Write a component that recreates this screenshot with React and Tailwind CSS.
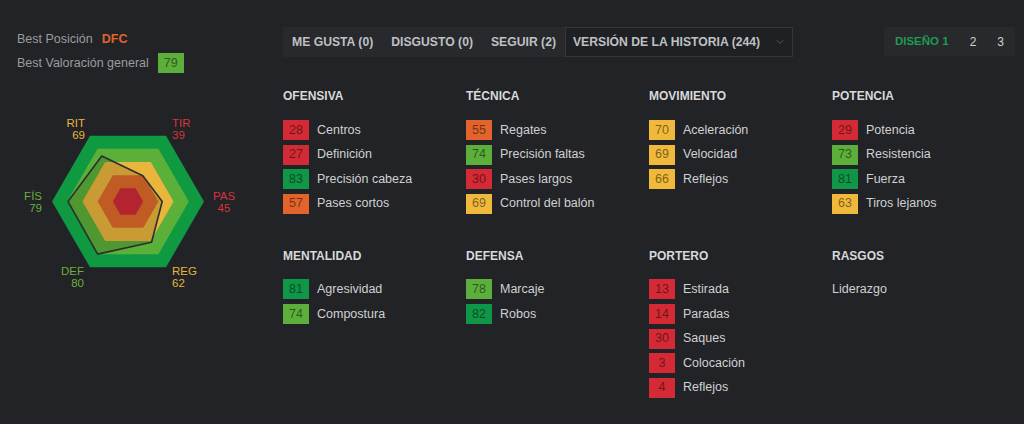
import { ChevronDown } from "lucide-react";

const sections = [
  {
    title: "OFENSIVA",
    stats: [
      [28, "Centros"],
      [27, "Definición"],
      [83, "Precisión cabeza"],
      [57, "Pases cortos"],
    ],
  },
  {
    title: "TÉCNICA",
    stats: [
      [55, "Regates"],
      [74, "Precisión faltas"],
      [30, "Pases largos"],
      [69, "Control del balón"],
    ],
  },
  {
    title: "MOVIMIENTO",
    stats: [
      [70, "Aceleración"],
      [69, "Velocidad"],
      [66, "Reflejos"],
    ],
  },
  {
    title: "POTENCIA",
    stats: [
      [29, "Potencia"],
      [73, "Resistencia"],
      [81, "Fuerza"],
      [63, "Tiros lejanos"],
    ],
  },
  {
    title: "MENTALIDAD",
    stats: [
      [81, "Agresividad"],
      [74, "Compostura"],
    ],
  },
  {
    title: "DEFENSA",
    stats: [
      [78, "Marcaje"],
      [82, "Robos"],
    ],
  },
  {
    title: "PORTERO",
    stats: [
      [13, "Estirada"],
      [14, "Paradas"],
      [30, "Saques"],
      [3, "Colocación"],
      [4, "Reflejos"],
    ],
  },
  {
    title: "RASGOS",
    traits: ["Liderazgo"],
  },
];

function badgeColor(v) {
  if (v >= 80) return "bg-[#109647]";
  if (v >= 72) return "bg-[#5daf3b]";
  if (v >= 60) return "bg-[#f0b93c]";
  if (v >= 50) return "bg-[#e2632b]";
  return "bg-[#d42a35]";
}

function Badge({ value }) {
  return (
    <span
      className={
        "flex h-[20px] w-[26px] shrink-0 items-center justify-center text-[12.5px] text-black/50 " +
        badgeColor(value)
      }
    >
      {value}
    </span>
  );
}

const CX = 128;
const CY = 101.5;
const R = 76;

function hexPoints(r) {
  return [0, 60, 120, 180, 240, 300]
    .map((a) => {
      const t = (a * Math.PI) / 180;
      return `${(CX + r * Math.cos(t)).toFixed(2)},${(CY + r * Math.sin(t)).toFixed(2)}`;
    })
    .join(" ");
}

// order follows the hexagon angles: 0,60,120,180,240,300
const player = [45, 62, 80, 79, 69, 39];

function playerPoints() {
  return player
    .map((v, i) => {
      const t = (i * 60 * Math.PI) / 180;
      const r = (v / 100) * R;
      return `${(CX + r * Math.cos(t)).toFixed(2)},${(CY + r * Math.sin(t)).toFixed(2)}`;
    })
    .join(" ");
}

const labels = [
  { name: "RIT", val: "69", x: 85, anchor: "end", y: 27, color: "#e8b53b" },
  { name: "TIR", val: "39", x: 172, anchor: "start", y: 27, color: "#d8333f" },
  { name: "FÍS", val: "79", x: 42, anchor: "end", y: 100, color: "#6aae3f" },
  { name: "PAS", val: "45", x: 224, anchor: "middle", y: 100, color: "#d8333f" },
  { name: "DEF", val: "80", x: 84, anchor: "end", y: 175, color: "#6aae3f" },
  { name: "REG", val: "62", x: 172, anchor: "start", y: 175, color: "#e8b53b" },
];

function Radar() {
  return (
    <svg width="260" height="200" viewBox="0 0 260 200" className="mt-[27px] block">
      <polygon points={hexPoints(R)} fill="#0f9a41" />
      <polygon points={hexPoints(R * 0.8)} fill="#5bb03a" />
      <polygon points={hexPoints(R * 0.6)} fill="#e9b53d" />
      <polygon points={hexPoints(R * 0.4)} fill="#df6a29" />
      <polygon points={hexPoints(R * 0.2)} fill="#d12b3a" />
      <polygon
        points={playerPoints()}
        fill="rgba(0,0,0,0.14)"
        stroke="#2b302d"
        strokeWidth="1.6"
        strokeLinejoin="round"
      />
      {labels.map((l) => (
        <g key={l.name} fill={l.color} fontSize="11.5" fontFamily="'Liberation Sans', Arial, sans-serif">
          <text x={l.x} y={l.y} textAnchor={l.anchor}>
            {l.name}
          </text>
          <text x={l.x} y={l.y + 11.5} textAnchor={l.anchor}>
            {l.val}
          </text>
        </g>
      ))}
    </svg>
  );
}

function Section({ section }) {
  return (
    <div>
      <h3 className="text-[12px] leading-[16px] font-bold text-[#d8d9db]">{section.title}</h3>
      <div className="mt-[15.6px] flex flex-col gap-[4.6px]">
        {section.stats &&
          section.stats.map(([v, name]) => (
            <div key={name} className="flex h-[20px] items-center gap-[8px]">
              <Badge value={v} />
              <span className="text-[12.5px] text-[#d0d1d3]">{name}</span>
            </div>
          ))}
        {section.traits &&
          section.traits.map((t) => (
            <div key={t} className="flex h-[20px] items-center">
              <span className="text-[12.5px] text-[#d0d1d3]">{t}</span>
            </div>
          ))}
      </div>
    </div>
  );
}

export default function App() {
  return (
    <main
      className="flex h-[424px] w-[1024px] overflow-hidden bg-[#212326] text-[#c8c9cb]"
      style={{ fontFamily: "'Liberation Sans', Arial, sans-serif" }}
    >
      <div className="w-[283px] shrink-0 pt-[29px]">
        <div className="flex flex-col gap-[4px] pl-[17px]">
          <div className="flex h-[20px] items-center gap-[9px] text-[12.5px]">
            <span className="text-[#9a9ca0]">Best Posición</span>
            <span className="font-bold text-[#e2632b]">DFC</span>
          </div>
          <div className="flex h-[20px] items-center gap-[9px] text-[12.5px]">
            <span className="text-[#9a9ca0]">Best Valoración general</span>
            <Badge value={79} />
          </div>
        </div>
        <Radar />
      </div>

      <div className="w-[732px] shrink-0 pt-[27px]">
        <div className="flex justify-between">
          <div className="flex h-[30px] items-stretch bg-[#27292c] text-[12.2px] font-bold text-[#bfc0c3]">
            <button className="px-[9px]">ME GUSTA (0)</button>
            <button className="px-[9px]">DISGUSTO (0)</button>
            <button className="px-[9px]">SEGUIR (2)</button>
            <div className="flex w-[228px] items-center justify-between border border-[#34363a] bg-[#1e2023] pl-[7px] pr-[6px]">
              <span>VERSIÓN DE LA HISTORIA (244)</span>
              <ChevronDown size={12} strokeWidth={1.5} className="text-[#66686c]" />
            </div>
          </div>
          <div className="flex h-[29px] items-center bg-[#27292c] text-[12px]">
            <button className="px-[11px] font-bold text-[11.5px] text-[#1f9a4f]">DISEÑO 1</button>
            <button className="px-[10px] text-[#d0d1d3]">2</button>
            <button className="px-[11px] text-[#d0d1d3]">3</button>
          </div>
        </div>

        <div className="mt-[31.4px] grid grid-cols-4 gap-y-[34px]">
          {sections.map((s) => (
            <Section key={s.title} section={s} />
          ))}
        </div>
      </div>
    </main>
  );
}
